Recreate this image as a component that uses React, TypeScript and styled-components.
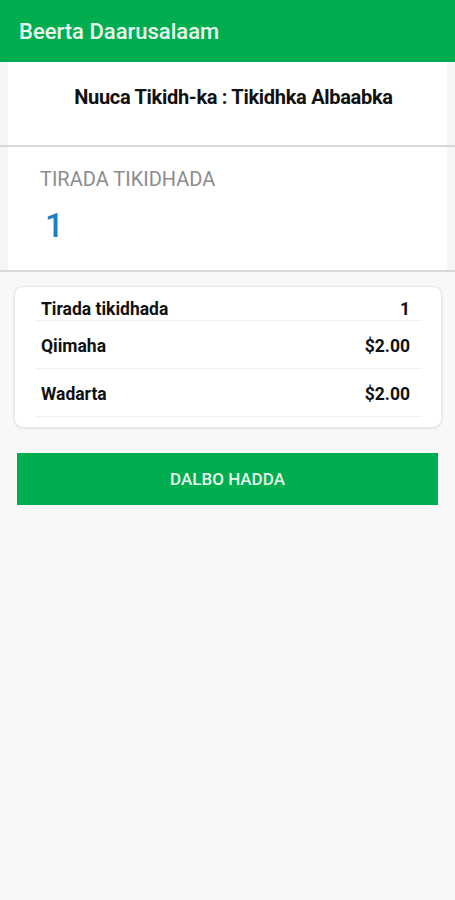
import styled, { createGlobalStyle } from 'styled-components';

const GlobalStyle = createGlobalStyle`
  *, *::before, *::after {
    box-sizing: border-box;
  }
  html, body {
    margin: 0;
    padding: 0;
    background-color: #f8f8f8;
    font-family: Roboto, "Liberation Sans", sans-serif;
  }
`;

const Screen = styled.div`
  width: 455px;
  min-height: 900px;
  background-color: #f8f8f8;
`;

const AppBar = styled.div`
  height: 62px;
  background-color: #00ad4f;
  display: flex;
  align-items: center;
  padding-left: 19px;
`;

const AppTitle = styled.h1`
  margin: 0;
  font-size: 22px;
  font-weight: 500;
  color: #eaf7ee;
`;

const Section = styled.div<{ height: number }>`
  height: ${(props) => props.height}px;
  padding: 0 8px;
  background-color: #f6f6f6;
  border-bottom: 2px solid #d8d8d8;
  display: flex;
`;

const SectionCard = styled.div`
  flex: 1;
  background-color: #ffffff;
  display: flex;
  flex-direction: column;
`;

const TicketType = styled.div`
  margin-top: 23px;
  padding-left: 12px;
  text-align: center;
  font-size: 20px;
  font-weight: 700;
  color: #111111;
  letter-spacing: -0.3px;
`;

const CountLabel = styled.div`
  margin: 20px 0 0 32px;
  font-size: 20px;
  color: #8c8c8c;
`;

const CountValue = styled.div`
  margin: 15px 0 0 37px;
  font-size: 33px;
  font-weight: 500;
  color: #1f7fc1;
`;

const Summary = styled.div`
  margin: 14px 13px 0 14px;
  padding: 10px 19px 10px 21px;
  background-color: #ffffff;
  border: 1px solid #e6e6e6;
  border-radius: 9px;
  box-shadow: 0 1px 3px rgba(0, 0, 0, 0.08);
`;

const Row = styled.div<{ tall?: boolean }>`
  height: ${(props) => (props.tall ? 48 : 24)}px;
  padding: ${(props) => (props.tall ? '3px 12px 0 5px' : '0 12px 0 5px')};
  border-bottom: 1px solid #f0f0f0;
  display: flex;
  align-items: center;
  justify-content: space-between;
  font-size: 17.5px;
  font-weight: 700;
  color: #111111;
`;

const OrderButton = styled.button`
  display: block;
  width: 421px;
  height: 52px;
  margin: 25px 0 0 17px;
  border: none;
  background-color: #00ad4f;
  color: #e8f6ec;
  font-family: Roboto, "Liberation Sans", sans-serif;
  font-size: 17px;
  font-weight: 500;
`;

const App = () => {
  return (
    <Screen>
      <GlobalStyle />
      <AppBar>
        <AppTitle>Beerta Daarusalaam</AppTitle>
      </AppBar>
      <Section height={85}>
        <SectionCard>
          <TicketType>Nuuca Tikidh-ka : Tikidhka Albaabka</TicketType>
        </SectionCard>
      </Section>
      <Section height={125}>
        <SectionCard>
          <CountLabel>TIRADA TIKIDHADA</CountLabel>
          <CountValue>1</CountValue>
        </SectionCard>
      </Section>
      <Summary>
        <Row>
          <span>Tirada tikidhada</span>
          <span>1</span>
        </Row>
        <Row tall>
          <span>Qiimaha</span>
          <span>$2.00</span>
        </Row>
        <Row tall>
          <span>Wadarta</span>
          <span>$2.00</span>
        </Row>
      </Summary>
      <OrderButton>DALBO HADDA</OrderButton>
    </Screen>
  );
};

export default App;
